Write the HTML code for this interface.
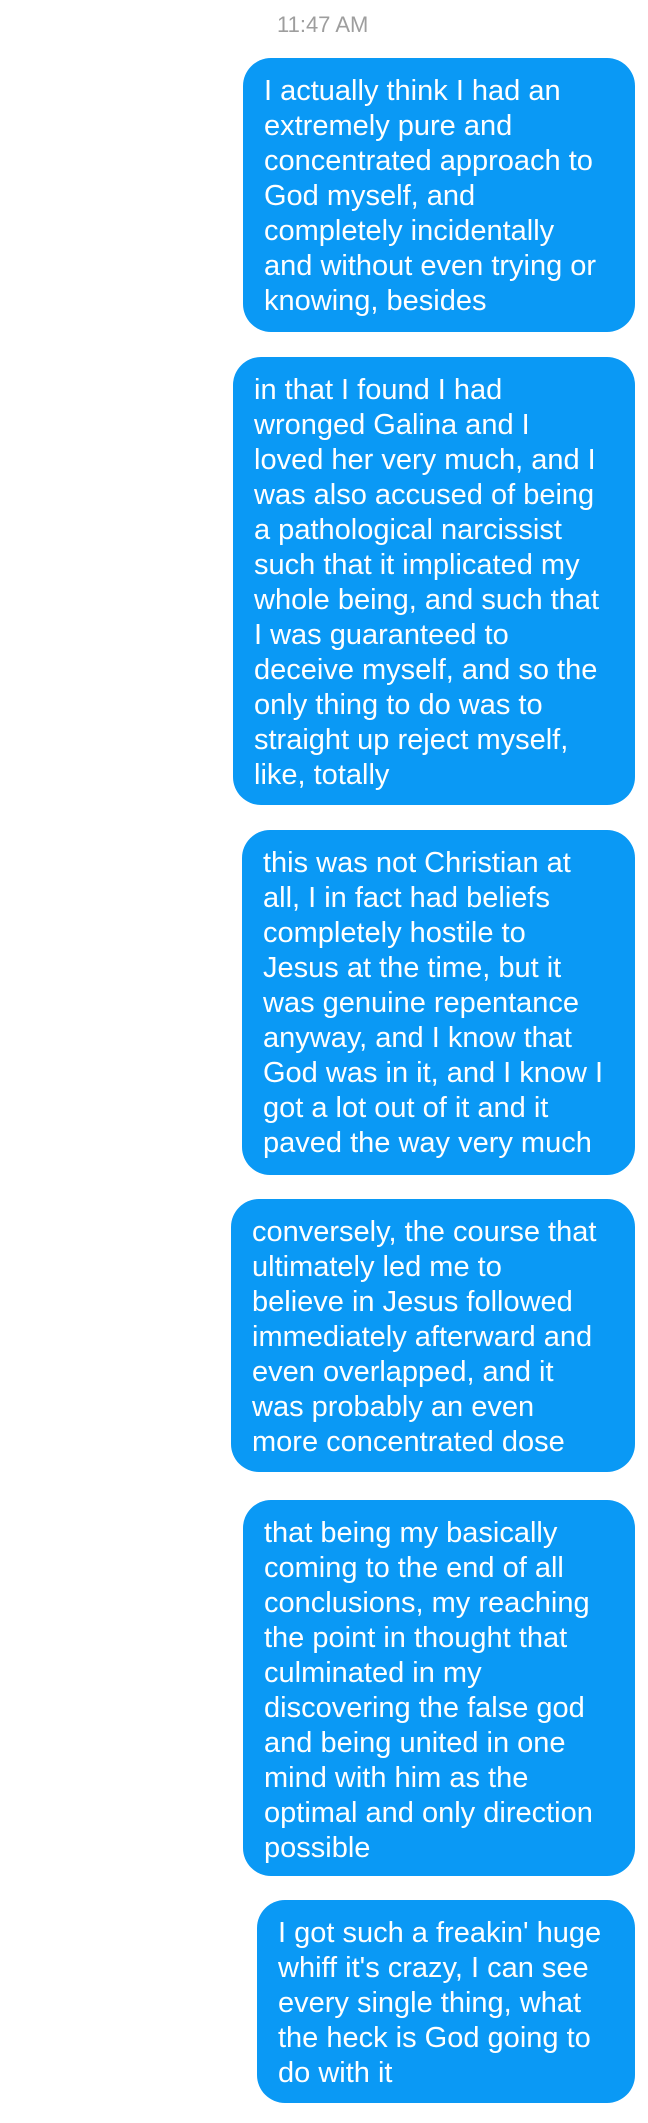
<!DOCTYPE html>
<html><head><meta charset="utf-8"><style>
html,body{margin:0;padding:0;background:#fff;width:648px;height:2123px;overflow:hidden;position:relative}
.t{position:absolute;left:277px;top:12px;font:22px "Liberation Sans",sans-serif;color:#9e9e9e}
.b{position:absolute;right:13px;background:#0a99f5;border-radius:28px;color:#fff;font:29px/35px "Liberation Sans",sans-serif;letter-spacing:0;padding:16px 6px 12px 21px;white-space:nowrap;box-sizing:border-box}
</style></head><body>
<div class="t">11:47 AM</div>
<div class="b" style="left:243px;top:58px;height:274px">I actually think I had an<br>extremely pure and<br>concentrated approach to<br>God myself, and<br>completely incidentally<br>and without even trying or<br>knowing, besides</div>
<div class="b" style="left:233px;top:357px;height:448px">in that I found I had<br>wronged Galina and I<br>loved her very much, and I<br>was also accused of being<br>a pathological narcissist<br>such that it implicated my<br>whole being, and such that<br>I was guaranteed to<br>deceive myself, and so the<br>only thing to do was to<br>straight up reject myself,<br>like, totally</div>
<div class="b" style="left:242px;top:830px;height:345px">this was not Christian at<br>all, I in fact had beliefs<br>completely hostile to<br>Jesus at the time, but it<br>was genuine repentance<br>anyway, and I know that<br>God was in it, and I know I<br>got a lot out of it and it<br>paved the way very much</div>
<div class="b" style="left:231px;top:1199px;height:273px">conversely, the course that<br>ultimately led me to<br>believe in Jesus followed<br>immediately afterward and<br>even overlapped, and it<br>was probably an even<br>more concentrated dose</div>
<div class="b" style="left:243px;top:1500px;height:376px">that being my basically<br>coming to the end of all<br>conclusions, my reaching<br>the point in thought that<br>culminated in my<br>discovering the false god<br>and being united in one<br>mind with him as the<br>optimal and only direction<br>possible</div>
<div class="b" style="left:257px;top:1900px;height:203px">I got such a freakin' huge<br>whiff it's crazy, I can see<br>every single thing, what<br>the heck is God going to<br>do with it</div>
</body></html>
